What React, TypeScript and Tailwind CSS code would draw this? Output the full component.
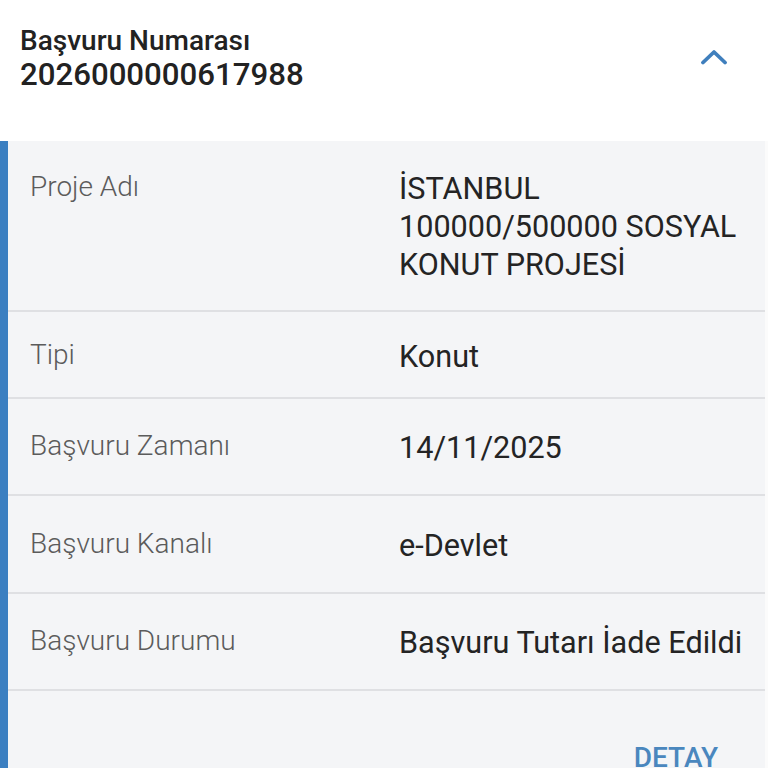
import React from 'react';

type Row = { label: string; value: string[]; pad: string };

const rows: Row[] = [
  { label: 'Proje Adı', value: ['İSTANBUL', '100000/500000 SOSYAL', 'KONUT PROJESİ'], pad: 'pt-[27px] pb-[28px]' },
  { label: 'Tipi', value: ['Konut'], pad: 'pt-[24px] pb-[23px]' },
  { label: 'Başvuru Zamanı', value: ['14/11/2025'], pad: 'pt-[28px] pb-[29px]' },
  { label: 'Başvuru Kanalı', value: ['e-Devlet'], pad: 'py-[29px]' },
  { label: 'Başvuru Durumu', value: ['Başvuru Tutarı İade Edildi'], pad: 'pt-[28px] pb-[29px]' },
];

const App: React.FC = () => {
  return (
    <div className="w-[768px] h-[768px] overflow-hidden bg-white font-['Roboto',sans-serif]">
      {/* header */}
      <div className="h-[141px] flex items-start justify-between pl-[20px] pr-[40px] pt-[25px]">
        <div className="flex flex-col">
          <span className="text-[28px] leading-[32px] font-medium text-[#222]">Başvuru Numarası</span>
          <span className="text-[31.2px] leading-[36px] font-medium text-[#222]">2026000000617988</span>
        </div>
        <svg width="28" height="16" viewBox="0 0 28 16" className="mt-[24px]">
          <polyline points="3,13.5 14,3 25,13.5" fill="none" stroke="#3f7fbd" strokeWidth="3.8" strokeLinecap="round" strokeLinejoin="round" />
        </svg>
      </div>

      {/* detail card */}
      <div className="flex bg-[#f4f5f7] border-r-[3px] border-[#fbfbfb]">
        <div className="w-[8px] bg-[#3b7fc1] shrink-0" />
        <div className="flex-1 flex flex-col">
          {rows.map((r) => (
            <div key={r.label} className={`flex items-start border-b-2 border-[#dfe0e3] ${r.pad}`}>
              <div className="w-[391px] pl-[22px] text-[28px] leading-[38px] text-[#5b5b5b] font-light">{r.label}</div>
              <div className="flex-1 text-[30.6px] leading-[38px] text-[#242424] pt-[2px] -mb-[2px]">
                {r.value.map((v) => (
                  <div key={v}>{v}</div>
                ))}
              </div>
            </div>
          ))}
          <div className="flex justify-end pr-[47px] pt-[48px] pb-[20px]">
            <span className="text-[28px] leading-[38px] font-medium text-[#4a87be]">DETAY</span>
          </div>
        </div>
      </div>
    </div>
  );
};

export default App;
